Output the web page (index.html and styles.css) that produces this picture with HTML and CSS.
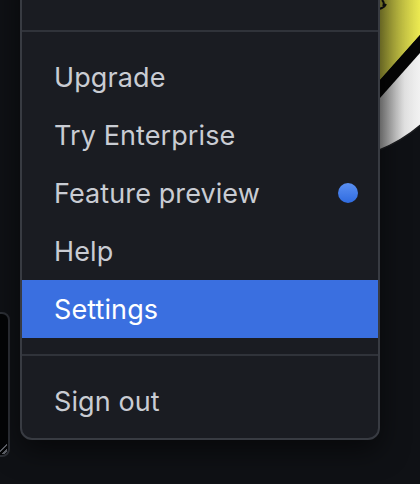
FILE: index.html
```html
<!DOCTYPE html>
<html lang="en">
<head>
  <meta charset="UTF-8" />
  <title>Account menu</title>
  <link rel="stylesheet" href="styles.css">
</head>
<body>

<svg class="avatar" width="120" height="170" viewBox="0 0 120 170" aria-hidden="true">
  <defs>
    <clipPath id="avatar-clip">
      <circle cx="23" cy="11" r="150" />
    </clipPath>
    <linearGradient id="yellow" gradientUnits="userSpaceOnUse" x1="80" y1="0" x2="120" y2="0">
      <stop offset="0" stop-color="#8f8d31" />
      <stop offset="1" stop-color="#ecea52" />
    </linearGradient>
    <linearGradient id="white" gradientUnits="userSpaceOnUse" x1="80" y1="0" x2="120" y2="0">
      <stop offset="0" stop-color="#8e8e8e" />
      <stop offset="0.6" stop-color="#e2e2e2" />
      <stop offset="1" stop-color="#f2f2f2" />
    </linearGradient>
  </defs>
  <g clip-path="url(#avatar-clip)">
    <polygon points="0,-20 120,-20 120,35 0,170" fill="url(#yellow)" />
    <polygon points="0,170 120,35 120,53 0,188" fill="#050505" />
    <polygon points="0,188 120,53 120,200 0,200" fill="url(#white)" />
  </g>
  <circle cx="23" cy="11" r="150" fill="none" stroke="#1b1c1f" stroke-width="1.5" />
  <path d="M79 9 q5 -1 7 -5 M82 0 q3 3 1 6" fill="none" stroke="#111" stroke-width="2" />
</svg>

<div class="composer">
  <span class="grip"></span>
</div>

<div class="menu">
  <div class="menu-head"></div>
  <hr class="menu-divider" />
  <ul class="menu-group">
    <li class="menu-item">Upgrade</li>
    <li class="menu-item">Try Enterprise</li>
    <li class="menu-item">Feature preview <span class="dot"></span></li>
    <li class="menu-item">Help</li>
    <li class="menu-item active">Settings</li>
  </ul>
  <hr class="menu-divider" />
  <ul class="menu-group">
    <li class="menu-item">Sign out</li>
  </ul>
</div>

</body>
</html>
```

FILE: styles.css
```css
body {
  margin: 0;
  height: 484px;
  overflow: hidden;
  position: relative;
  background-color: #0f1115;
  font-family: Inter, "Noto Sans", sans-serif;
}

.avatar {
  position: absolute;
  top: 0;
  right: 0;
}

/* input box peeking in at the left edge */
.composer {
  position: absolute;
  left: -30px;
  top: 312px;
  width: 36px;
  height: 141px;
  border: 2px solid #2c2f35;
  border-radius: 8px;
  background-color: #040506;
}
.grip {
  position: absolute;
  right: 1px;
  bottom: 1px;
  width: 10px;
  height: 10px;
  background:
    linear-gradient(135deg, transparent 46%, #5c5f66 46%, #5c5f66 58%, transparent 58%),
    linear-gradient(135deg, transparent 74%, #5c5f66 74%, #5c5f66 86%, transparent 86%);
}

.menu {
  position: absolute;
  left: 20px;
  top: -40px;
  width: 356px;
  background-color: #1a1c22;
  border: 2px solid #383b42;
  border-radius: 12px;
  box-shadow: 0 10px 28px rgba(0, 0, 0, 0.55);
}

.menu-head {
  height: 60px;
}

.menu-divider {
  margin: 0;
  border: none;
  height: 2px;
  background-color: #30333a;
}
.menu-head + .menu-divider {
  margin-top: 8px;
}

.menu-group {
  list-style: none;
  margin: 0;
  padding: 16px 0 8px;
}
.menu-group + .menu-divider {
  margin-top: 8px;
}

.menu-item {
  display: flex;
  align-items: center;
  justify-content: space-between;
  height: 58px;
  padding: 0 20px 0 32px;
  font-size: 27px;
  color: #c9ccd3;
  letter-spacing: 0.1px;
}
.menu-item.active {
  background-color: #3a6fe0;
  color: #ffffff;
}

.dot {
  width: 20px;
  height: 20px;
  border-radius: 50%;
  background: linear-gradient(#5b90f2, #2f6be0);
}
```
